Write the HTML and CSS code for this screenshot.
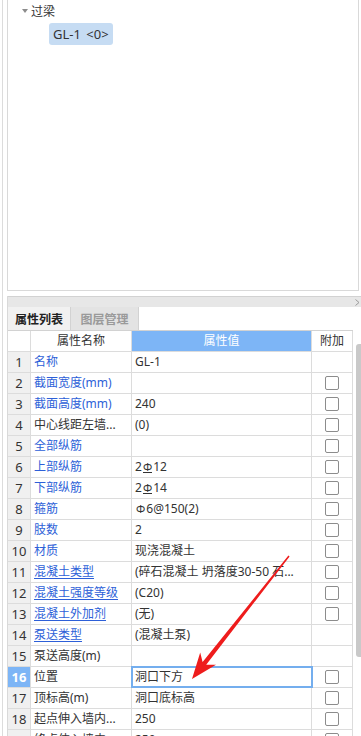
FILE: index.html
```html
<!DOCTYPE html>
<html lang="zh-CN">
<head>
<meta charset="utf-8">
<link rel="stylesheet" href="styles.css">
</head>
<body>
<div class="frame">
  <div class="tree-panel">
    <div class="tree-node"><span class="caret"></span><span>过梁</span></div>
    <div class="tree-leaf"><span class="chip">GL-1 &lt;0&gt;</span></div>
  </div>
  <div class="lower">
    <div class="band">
      <svg class="band-chevron" width="5" height="7" viewBox="0 0 5 7"><path d="M0.5 0.5 L4 3.5 L0.5 6.5" fill="none" stroke="#9a9a9a" stroke-width="1"/></svg>
    </div>
    <div class="tabs">
      <div class="tab active">属性列表</div>
      <div class="tab idle">图层管理</div>
    </div>
    <div class="grid-area">
      <div class="grid">
        <div class="row head">
          <div class="cell num"></div>
          <div class="cell name">属性名称</div>
          <div class="cell val">属性值</div>
          <div class="cell add">附加</div>
        </div>
        <div class="row">
          <div class="cell num">1</div>
          <div class="cell name blue">名称</div>
          <div class="cell val">GL-1</div>
          <div class="cell add"></div>
        </div>
        <div class="row">
          <div class="cell num">2</div>
          <div class="cell name blue">截面宽度(mm)</div>
          <div class="cell val"></div>
          <div class="cell add"><span class="cb"></span></div>
        </div>
        <div class="row">
          <div class="cell num">3</div>
          <div class="cell name blue">截面高度(mm)</div>
          <div class="cell val">240</div>
          <div class="cell add"><span class="cb"></span></div>
        </div>
        <div class="row">
          <div class="cell num">4</div>
          <div class="cell name">中心线距左墙...</div>
          <div class="cell val">(0)</div>
          <div class="cell add"><span class="cb"></span></div>
        </div>
        <div class="row">
          <div class="cell num">5</div>
          <div class="cell name blue">全部纵筋</div>
          <div class="cell val"></div>
          <div class="cell add"><span class="cb"></span></div>
        </div>
        <div class="row">
          <div class="cell num">6</div>
          <div class="cell name blue">上部纵筋</div>
          <div class="cell val">2<span class="hrb">Φ</span>12</div>
          <div class="cell add"><span class="cb"></span></div>
        </div>
        <div class="row">
          <div class="cell num">7</div>
          <div class="cell name blue">下部纵筋</div>
          <div class="cell val">2<span class="hrb">Φ</span>14</div>
          <div class="cell add"><span class="cb"></span></div>
        </div>
        <div class="row">
          <div class="cell num">8</div>
          <div class="cell name blue">箍筋</div>
          <div class="cell val"><span class="hpb">Φ</span>6@150(2)</div>
          <div class="cell add"><span class="cb"></span></div>
        </div>
        <div class="row">
          <div class="cell num">9</div>
          <div class="cell name blue">肢数</div>
          <div class="cell val">2</div>
          <div class="cell add"><span class="cb"></span></div>
        </div>
        <div class="row">
          <div class="cell num">10</div>
          <div class="cell name blue">材质</div>
          <div class="cell val">现浇混凝土</div>
          <div class="cell add"><span class="cb"></span></div>
        </div>
        <div class="row">
          <div class="cell num">11</div>
          <div class="cell name blue ul">混凝土类型</div>
          <div class="cell val">(碎石混凝土 坍落度30-50 石...</div>
          <div class="cell add"><span class="cb"></span></div>
        </div>
        <div class="row">
          <div class="cell num">12</div>
          <div class="cell name blue ul">混凝土强度等级</div>
          <div class="cell val">(C20)</div>
          <div class="cell add"><span class="cb"></span></div>
        </div>
        <div class="row">
          <div class="cell num">13</div>
          <div class="cell name blue ul">混凝土外加剂</div>
          <div class="cell val">(无)</div>
          <div class="cell add"><span class="cb"></span></div>
        </div>
        <div class="row">
          <div class="cell num">14</div>
          <div class="cell name blue ul">泵送类型</div>
          <div class="cell val">(混凝土泵)</div>
          <div class="cell add"></div>
        </div>
        <div class="row">
          <div class="cell num">15</div>
          <div class="cell name">泵送高度(m)</div>
          <div class="cell val"></div>
          <div class="cell add"></div>
        </div>
        <div class="row sel">
          <div class="cell num">16</div>
          <div class="cell name">位置</div>
          <div class="cell val">洞口下方</div>
          <div class="cell add"><span class="cb"></span></div>
        </div>
        <div class="row">
          <div class="cell num">17</div>
          <div class="cell name">顶标高(m)</div>
          <div class="cell val">洞口底标高</div>
          <div class="cell add"><span class="cb"></span></div>
        </div>
        <div class="row">
          <div class="cell num">18</div>
          <div class="cell name">起点伸入墙内...</div>
          <div class="cell val">250</div>
          <div class="cell add"><span class="cb"></span></div>
        </div>
        <div class="row">
          <div class="cell num">19</div>
          <div class="cell name">终点伸入墙内...</div>
          <div class="cell val">250</div>
          <div class="cell add"><span class="cb"></span></div>
        </div>
      </div>
      <div class="vscroll"><div class="thumb"></div></div>
    </div>
  </div>
</div>
<svg class="annot" width="361" height="736" viewBox="0 0 361 736">
  <polygon fill="#ee1c1c" points="289.6,556.4 206.2,664.7 216.0,664.8 192,679 200.2,652.4 202.6,661.9 288.4,555.6"/>
</svg>
</body>
</html>
```

FILE: styles.css
```css
html, body {
  margin: 0;
  height: 100%;
  overflow: hidden;
  background: #fff;
}

body {
  font-family: "Noto Sans", "Noto Sans CJK SC", sans-serif;
  font-size: 12px;
  color: #333;
  position: relative;
}

.frame {
  margin-left: 2px;
  border-left: 1px solid #dcdcdc;
  padding-left: 4px;
  height: 100%;
  box-sizing: border-box;
}

.tree-panel {
  width: 352px;
  height: 291px;
  box-sizing: border-box;
  border: 1px solid #d9d9d9;
  border-top: 0;
  padding-top: 2px;
}

.tree-node {
  display: flex;
  align-items: center;
  gap: 3px;
  height: 18px;
  padding-left: 14px;
  color: #333;
}

.caret {
  width: 0;
  height: 0;
  border-left: 3px solid transparent;
  border-right: 3px solid transparent;
  border-top: 4px solid #8c8c8c;
}

.tree-leaf {
  margin-top: 3px;
  padding-left: 41px;
}

.chip {
  display: inline-block;
  height: 22px;
  line-height: 22px;
  padding: 0 4px;
  border-radius: 3px;
  background: #c6dcf3;
  font-size: 13px;
  word-spacing: 2px;
  color: #333;
}

.lower {
  margin-top: 5px;
  border-left: 1px solid #d9d9d9;
}

.band {
  height: 11px;
  box-sizing: border-box;
  border-top: 1px solid #d2d2d2;
  background: #e7e7e7;
  display: flex;
  justify-content: flex-end;
  align-items: center;
}

.band-chevron {
  display: block;
  margin-right: 1px;
}

.tabs {
  display: flex;
  height: 23px;
}

.tab {
  display: flex;
  align-items: center;
  justify-content: center;
  box-sizing: border-box;
  border-right: 1px solid #d2d2d2;
  font-weight: bold;
  font-size: 12px;
}

.tab.active {
  width: 63px;
  background: #f1f1f1;
  color: #222;
}

.tab.idle {
  width: 68px;
  background: #e3e3e3;
  color: #9a9a9a;
}

.grid-area {
  display: flex;
}

.grid {
  width: 345px;
  border-top: 1px solid #d2d2d2;
}

.row {
  display: grid;
  grid-template-columns: 23px 101px 180px 41px;
  height: 21px;
  box-sizing: border-box;
  border-bottom: 1px solid #dcdcdc;
}

.cell {
  box-sizing: border-box;
  border-right: 1px solid #dcdcdc;
  line-height: 20px;
  white-space: nowrap;
  overflow: hidden;
}

.num {
  background: #f0f0f0;
  text-align: center;
  font-size: 13px;
  color: #333;
}

.name {
  padding-left: 3px;
}

.val {
  padding-left: 3px;
}

.add {
  display: flex;
  align-items: center;
  justify-content: center;
}

.head .num {
  background: #fff;
}

.head .name,
.head .val {
  text-align: center;
  padding-left: 0;
}

.head .val {
  background: #7db5f6;
  color: #fff;
}

.blue {
  color: #2d5fd8;
}

.ul {
  text-decoration: underline;
  text-underline-offset: 2px;
}

.cb {
  width: 14px;
  height: 14px;
  box-sizing: border-box;
  border: 1px solid #8c8c8c;
  border-radius: 2px;
  background: #fff;
}

.hrb,
.hpb {
  display: inline-block;
  font-size: 11px;
  margin: 0 1px;
}

.hrb {
  background-image: linear-gradient(#333, #333);
  background-repeat: no-repeat;
  background-size: 100% 1px;
  background-position: 0 78%;
}

.sel .num {
  background: #7db5f6;
  color: #fff;
  font-weight: bold;
}

.sel .val {
  outline: 2px solid #74aeee;
  outline-offset: -1px;
}

.vscroll {
  width: 8px;
  padding-left: 3px;
  padding-top: 14px;
  box-sizing: border-box;
}

.thumb {
  width: 5px;
  height: 313px;
  border-radius: 3px 0 0 3px;
  background: #c9c9c9;
}

.annot {
  position: absolute;
  top: 0;
  left: 0;
  pointer-events: none;
}
```
